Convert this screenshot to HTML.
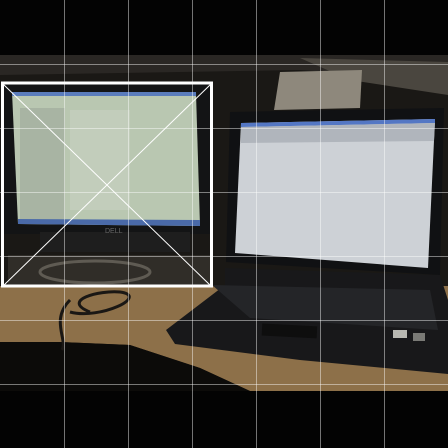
<!DOCTYPE html>
<html><head><style>html,body{margin:0;padding:0;background:#000;width:448px;height:448px;overflow:hidden}</style></head>
<body>
<svg width="448" height="448" viewBox="0 0 448 448" xmlns="http://www.w3.org/2000/svg">
<rect width="448" height="448" fill="#030303"/>
<rect x="0" y="55" width="448" height="336" fill="#1a1815"/>
<polygon points="0,55 448,55 448,80 300,70 0,75" fill="#2a2724"/>
<polygon points="300,58 448,62 448,95 350,80" fill="#4a463f"/>
<polygon points="280,72 362,70 360,108 274,110" fill="#8e887c"/>
<!-- desk -->
<polygon points="0,286 448,286 448,391 250,391 200,368 130,345 60,342 0,342" fill="#8d7049"/>
<polygon points="0,332 60,332 130,336 200,355 250,378 260,391 0,391" fill="#8a7554" opacity="0"/>
<polygon points="0,342 60,342 130,345 200,368 250,391 0,391" fill="#0c0b09"/>
<!-- cable -->
<path d="M90,312 C60,300 100,290 120,292 C150,296 100,320 70,312 M70,300 C50,320 68,340 62,350" stroke="#1a1714" stroke-width="3" fill="none"/>
<!-- laptop base -->
<polygon points="225,268 440,275 448,300 448,374 300,360 175,344 166,330 225,285" fill="#18181a"/>
<polygon points="212,285 430,290 438,330 250,318" fill="#242528"/>
<rect x="262" y="325" width="55" height="12" fill="#0e0e0e" transform="rotate(3 290 330)"/>
<rect x="393" y="330" width="14" height="8" fill="#b8b8b2"/>
<rect x="413" y="333" width="12" height="8" fill="#7a7a76"/>
<!-- laptop lid -->
<polygon points="230,112 444,108 440,275 226,262" fill="#101113"/>
<polygon points="241,123 435,119 428,268 235,253" fill="#cdd1d6"/>
<polygon points="241,123 435,119 435,123 241,127" fill="#5477c4"/>
<polygon points="241,127 435,123 434,141 241,143" fill="#b0b5bc"/>
<!-- monitor -->
<rect x="4" y="84" width="207" height="150" fill="#131415"/>
<polygon points="12,92 196,93 200,226 18,224" fill="#b9c7b1"/>
<rect x="12" y="92" width="184" height="4" fill="#5a7cbc"/>
<rect x="20" y="108" width="45" height="112" fill="#a8b4a3"/>
<rect x="70" y="110" width="60" height="100" fill="#c2cdbb"/>
<polygon points="18,219 200,220 200,226 18,224" fill="#4a6aa8"/>
<rect x="40" y="232" width="150" height="20" fill="#1e1e1e"/>
<rect x="8" y="255" width="202" height="30" fill="#302d28"/>
<ellipse cx="95" cy="272" rx="55" ry="11" fill="none" stroke="#5f5b53" stroke-width="3"/>
<text x="105" y="233" font-family="Liberation Sans, sans-serif" font-size="7" fill="#666">DELL</text>
<g stroke="#ffffff" stroke-opacity="0.45" stroke-width="1">
<line x1="64.5" y1="0" x2="64.5" y2="448"/><line x1="128.5" y1="0" x2="128.5" y2="448"/>
<line x1="192.5" y1="0" x2="192.5" y2="448"/><line x1="256.5" y1="0" x2="256.5" y2="448"/>
<line x1="320.5" y1="0" x2="320.5" y2="448"/><line x1="384.5" y1="0" x2="384.5" y2="448"/>
<line x1="0" y1="64.5" x2="448" y2="64.5"/><line x1="0" y1="128.5" x2="448" y2="128.5"/>
<line x1="0" y1="192.5" x2="448" y2="192.5"/><line x1="0" y1="256.5" x2="448" y2="256.5"/>
<line x1="0" y1="320.5" x2="448" y2="320.5"/><line x1="0" y1="384.5" x2="448" y2="384.5"/>
</g>
<rect x="2.5" y="83" width="209" height="203" fill="none" stroke="#fff" stroke-width="3"/>
<line x1="3" y1="84" x2="211" y2="286" stroke="#fff" stroke-width="1"/>
<line x1="211" y1="84" x2="3" y2="286" stroke="#fff" stroke-width="1"/>
</svg>
</body></html>
